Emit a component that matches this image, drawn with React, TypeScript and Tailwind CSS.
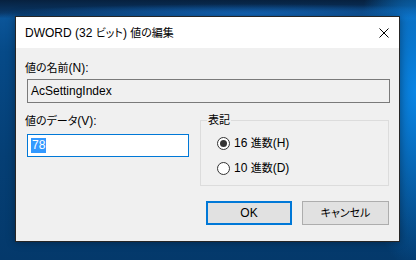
import React from "react";

const font = "[font-family:'Liberation_Sans','Noto_Sans_CJK_JP',sans-serif] [font-feature-settings:'palt']";

// Japanese runs are set a touch smaller so they take the width of the Windows UI font
const T = ({ children }: { children: string }) => (
  <>
    {children.split(/([\u3000-\u30ff\u4e00-\u9fff]+)/).map((part, i) =>
      i % 2 === 1 ? (
        <span key={i} className="text-[11px]">
          {part}
        </span>
      ) : (
        part
      )
    )}
  </>
);

const Radio = ({ checked, label }: { checked?: boolean; label: string }) => (
  <div className="flex items-center h-[16px]">
    <span className="w-[13px] h-[13px] rounded-full border border-[#333333] bg-white flex items-center justify-center">
      {checked && <span className="w-[7px] h-[7px] rounded-full bg-[#333333]" />}
    </span>
    <span className="ml-[4px] text-[12px] leading-4 text-black">
      <T>{label}</T>
    </span>
  </div>
);

export default function App() {
  return (
    <div
      className={`w-[416px] h-[260px] overflow-hidden pl-[15px] pt-[16px] ${font} bg-[radial-gradient(ellipse_60px_180px_at_100%_35%,#0a86e6_0%,rgba(10,120,215,0)_100%),radial-gradient(ellipse_260px_10px_at_60%_14px,rgba(20,110,200,0.9)_0%,rgba(20,110,200,0)_100%),linear-gradient(180deg,#07213f_0%,#0a3766_5%,#0b5599_7%,#064a88_20%,#053f75_60%,#04396b_100%)]`}
    >
      <div className="w-[385px] h-[226px] border border-[#262626] bg-[#f0f0f0] flex flex-col shadow-[0_0_8px_rgba(0,0,0,0.35)]">
        {/* title bar */}
        <div className="h-[31px] bg-white flex items-center justify-between pl-[9px] pr-[9px]">
          <span className="text-[12px] leading-4 text-black">
            <T>DWORD (32 ビット) 値の編集</T>
          </span>
          <svg width="10" height="10" viewBox="0 0 10 10" className="mr-[1px]">
            <path d="M0.5 0.5L9.5 9.5M9.5 0.5L0.5 9.5" stroke="#000" strokeWidth="1" />
          </svg>
        </div>

        {/* body */}
        <div className="flex flex-col pt-[12px] pl-[9px] pr-[9px]">
          <span className="text-[12px] leading-4 text-black">
            <T>値の名前(N):</T>
          </span>
          <div className="mt-[3px] ml-[2px] h-[24px] border border-[#7a7a7a] bg-[#f0f0f0] flex items-center pl-[3px]">
            <span className="text-[12px] leading-4 text-black">AcSettingIndex</span>
          </div>

          <div className="flex mt-[10px]">
            <div className="flex flex-col">
              <span className="text-[12px] leading-4 text-black">
                <T>値のデータ(V):</T>
              </span>
              <div className="mt-[5px] ml-[2px] w-[162px] h-[23px] border border-[#0078d7] bg-white flex items-center pl-[3px]">
                <span className="text-[12px] leading-[15px] text-white bg-[#3399ff] px-[1px]">78</span>
              </div>
            </div>

            <div className="relative ml-[11px] mt-[7px] w-[189px] h-[66px] border border-[#dcdcdc] flex flex-col pt-[14px] pl-[16px] gap-[9px]">
              <span className="absolute -top-[9px] left-[6px] px-[1px] bg-[#f0f0f0] text-[12px] leading-4 text-black">
                <T>表記</T>
              </span>
              <Radio checked label="16 進数(H)" />
              <Radio label="10 進数(D)" />
            </div>
          </div>

          <div className="flex justify-end gap-[10px] mt-[15px] mr-[1px]">
            <button className="w-[86px] h-[24px] border-2 border-[#0078d7] bg-[#e1e1e1] text-[12px] leading-4 text-black">
              OK
            </button>
            <button className="w-[87px] h-[24px] border border-[#adadad] bg-[#e1e1e1] text-[12px] leading-4 text-black">
              <T>キャンセル</T>
            </button>
          </div>
        </div>
      </div>
    </div>
  );
}
